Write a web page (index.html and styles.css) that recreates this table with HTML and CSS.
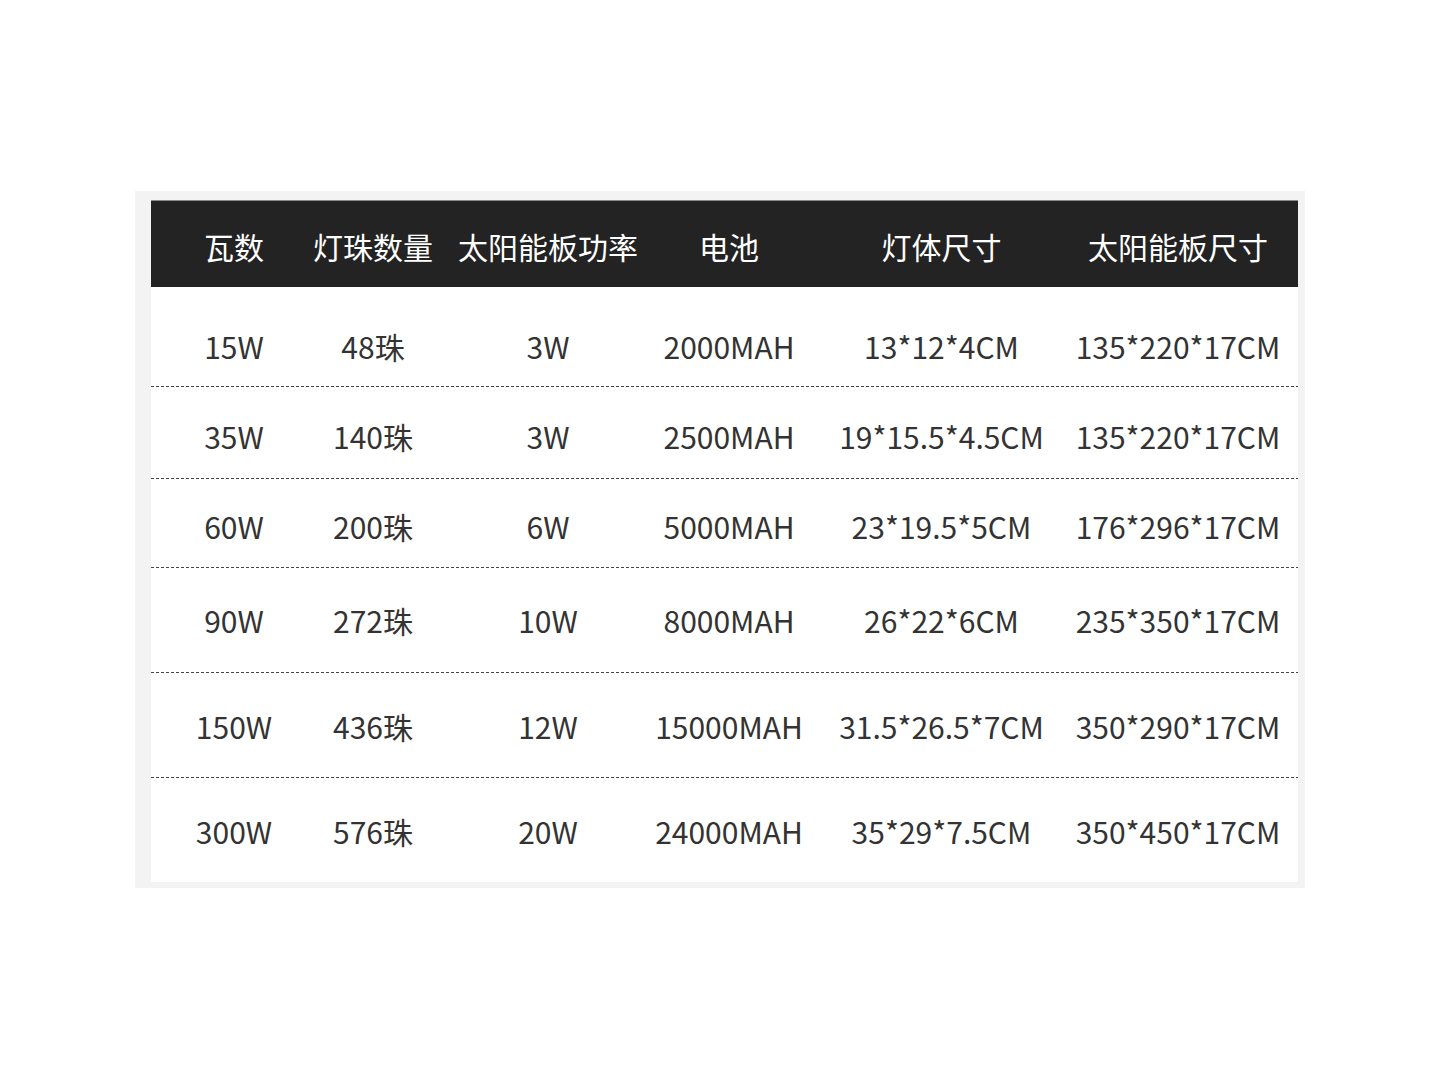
FILE: index.html
```html
<!DOCTYPE html>
<html lang="zh-CN">
<head>
<meta charset="utf-8">
<title>参数表</title>
<link rel="stylesheet" href="styles.css">
</head>
<body>
<div class="frame">
  <div class="table">
    <div class="row head">
      <div class="cell">瓦数</div>
      <div class="cell">灯珠数量</div>
      <div class="cell">太阳能板功率</div>
      <div class="cell">电池</div>
      <div class="cell">灯体尺寸</div>
      <div class="cell last">太阳能板尺寸</div>
    </div>
    <div class="row r1 line">
      <div class="cell">15W</div>
      <div class="cell">48珠</div>
      <div class="cell">3W</div>
      <div class="cell">2000MAH</div>
      <div class="cell">13*12*4CM</div>
      <div class="cell last">135*220*17CM</div>
    </div>
    <div class="row r2 line">
      <div class="cell">35W</div>
      <div class="cell">140珠</div>
      <div class="cell">3W</div>
      <div class="cell">2500MAH</div>
      <div class="cell">19*15.5*4.5CM</div>
      <div class="cell last">135*220*17CM</div>
    </div>
    <div class="row r3 line">
      <div class="cell">60W</div>
      <div class="cell">200珠</div>
      <div class="cell">6W</div>
      <div class="cell">5000MAH</div>
      <div class="cell">23*19.5*5CM</div>
      <div class="cell last">176*296*17CM</div>
    </div>
    <div class="row r4 line">
      <div class="cell">90W</div>
      <div class="cell">272珠</div>
      <div class="cell">10W</div>
      <div class="cell">8000MAH</div>
      <div class="cell">26*22*6CM</div>
      <div class="cell last">235*350*17CM</div>
    </div>
    <div class="row r5 line">
      <div class="cell">150W</div>
      <div class="cell">436珠</div>
      <div class="cell">12W</div>
      <div class="cell">15000MAH</div>
      <div class="cell">31.5*26.5*7CM</div>
      <div class="cell last">350*290*17CM</div>
    </div>
    <div class="row r6">
      <div class="cell">300W</div>
      <div class="cell">576珠</div>
      <div class="cell">20W</div>
      <div class="cell">24000MAH</div>
      <div class="cell">35*29*7.5CM</div>
      <div class="cell last">350*450*17CM</div>
    </div>
  </div>
</div>
</body>
</html>
```

FILE: styles.css
```css
html, body {
  margin: 0;
  padding: 0;
  background: #ffffff;
}

body {
  font-family: "Noto Sans CJK SC", "Noto Sans", sans-serif;
  font-size: 30px;
  line-height: 30px;
  color: #333333;
}

.frame {
  box-sizing: border-box;
  margin: 191px 0 0 135px;
  width: 1170px;
  height: 697px;
  padding: 9px 7px 6px 16px;
  background: #f3f3f3;
}

.table {
  width: 1147px;
  height: 682px;
  background: #ffffff;
  border-top: 1px solid #8a8a8a;
  box-sizing: border-box;
}

.row {
  display: grid;
  grid-template-columns: 166px 112px 238px 124px 301px 206px;
  box-sizing: border-box;
  align-items: start;
}

.cell {
  display: flex;
  justify-content: center;
  white-space: nowrap;
}

.cell.last {
  padding-right: 34px;
}

.head {
  height: 86px;
  padding-top: 30px;
  background: #232323;
  color: #ffffff;
}

.line {
  background-image: repeating-linear-gradient(to right, #444444 0 3px, transparent 3px 5px);
  background-size: 100% 1px;
  background-position: left bottom;
  background-repeat: no-repeat;
}

.r1 { height: 100px; padding-top: 44px; }
.r2 { height: 92px; padding-top: 34px; }
.r3 { height: 89px; padding-top: 32px; }
.r4 { height: 105px; padding-top: 37px; }
.r5 { height: 105px; padding-top: 38px; }
.r6 { height: 104px; padding-top: 38px; }
```
